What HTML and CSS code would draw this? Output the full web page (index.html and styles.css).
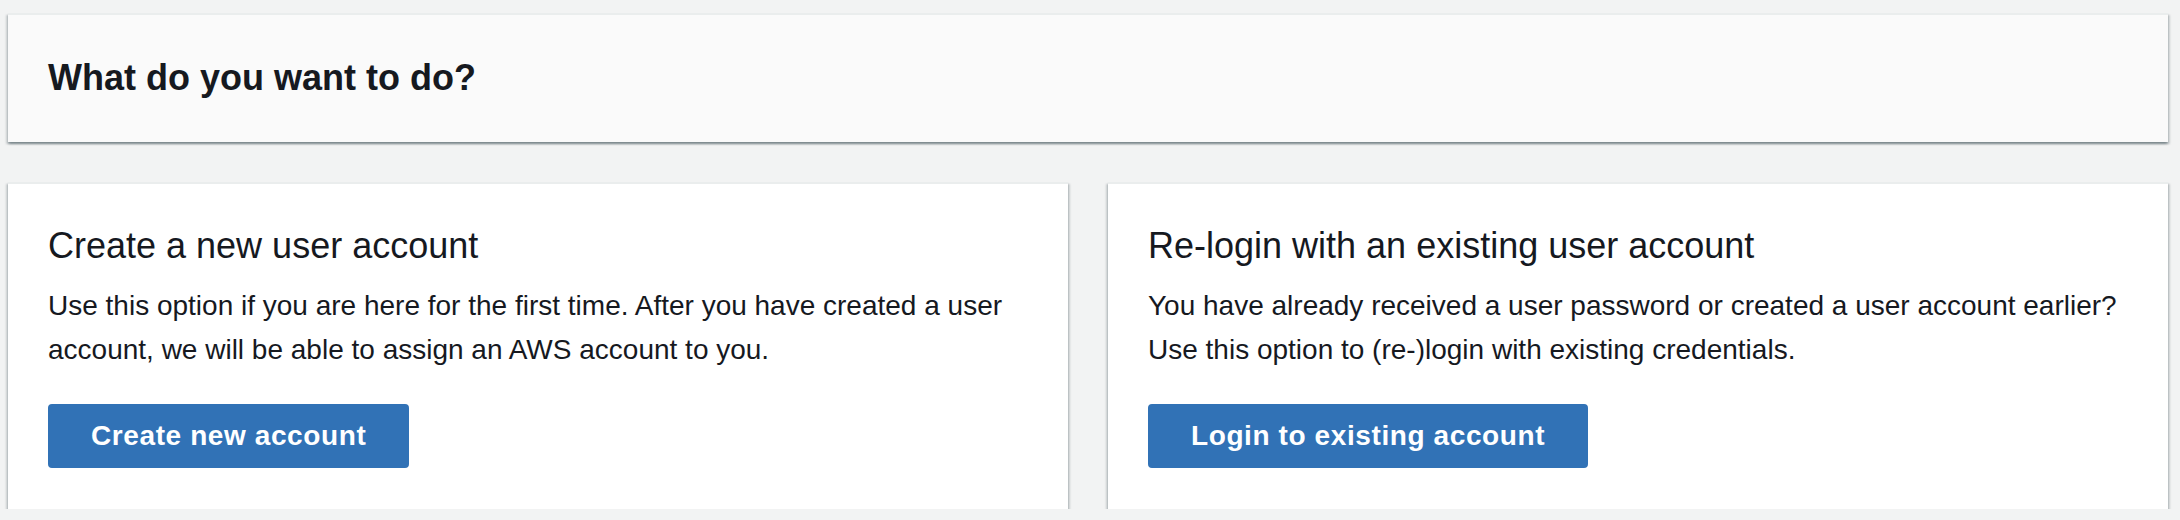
FILE: index.html
```html
<!DOCTYPE html>
<html lang="en">
<head>
<meta charset="utf-8">
<title>What do you want to do?</title>
<link rel="stylesheet" href="styles.css">
</head>
<body>
<div class="page">
  <div class="panel header-panel">
    <h1 class="page-title">What do you want to do?</h1>
  </div>
  <div class="cards">
    <div class="panel card">
      <h2 class="card-title">Create a new user account</h2>
      <p class="card-text">Use this option if you are here for the first time. After you have created a user<br>account, we will be able to assign an AWS account to you.</p>
      <button class="btn" type="button">Create new account</button>
    </div>
    <div class="panel card">
      <h2 class="card-title">Re-login with an existing user account</h2>
      <p class="card-text">You have already received a user password or created a user account earlier?<br>Use this option to (re-)login with existing credentials.</p>
      <button class="btn" type="button">Login to existing account</button>
    </div>
  </div>
</div>
</body>
</html>
```
FILE: styles.css
```css
html, body {
  margin: 0;
  padding: 0;
  background: #f2f3f3;
}

body {
  font-family: "Liberation Sans", Arial, Helvetica, sans-serif;
  color: #16191f;
}

.page {
  padding: 13px 12px 0 8px;
  display: flex;
  flex-direction: column;
  gap: 40px;
}

.panel {
  border-top: 2px solid #eaeded;
  box-shadow: 0 2px 2px 0 rgba(0, 28, 36, 0.3),
              2px 2px 2px 0 rgba(0, 28, 36, 0.15),
              -2px 2px 2px 0 rgba(0, 28, 36, 0.15);
  box-sizing: border-box;
}

.header-panel {
  background: #fafafa;
  padding: 39px 40px 40px;
}

.page-title {
  margin: 0;
  font-size: 36px;
  line-height: 48px;
  font-weight: 700;
  color: #16191f;
}

.cards {
  display: grid;
  grid-template-columns: 1fr 1fr;
  gap: 40px;
}

.card {
  background: #ffffff;
  padding: 39px 40px 41px;
  display: flex;
  flex-direction: column;
  align-items: flex-start;
}

.card-title {
  margin: 0 0 15px;
  font-size: 36px;
  line-height: 46px;
  font-weight: 400;
  color: #16191f;
}

.card-text {
  margin: 0 0 32px;
  font-size: 28px;
  line-height: 44px;
  color: #16191f;
}

.btn {
  font-family: "Liberation Sans", Arial, Helvetica, sans-serif;
  font-size: 28px;
  font-weight: 700;
  letter-spacing: 0.6px;
  color: #ffffff;
  background: #3172b6;
  border: 2px solid #3172b6;
  border-radius: 4px;
  height: 64px;
  padding: 0 41px;
  cursor: pointer;
}
```
